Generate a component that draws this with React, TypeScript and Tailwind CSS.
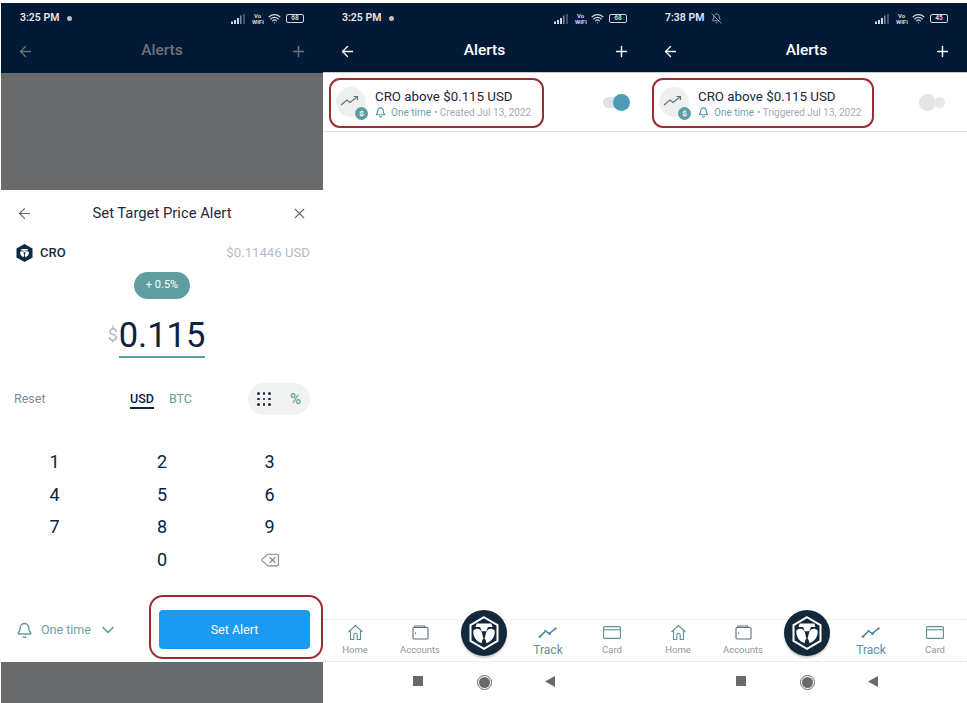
import type { ReactNode } from "react";
import { ArrowLeft, Bell, BellOff, ChevronDown, Delete, Plus, Wifi, X } from "lucide-react";

const NAVY = "#031a36";

const LionShapes = ({ fill }: { fill: string }) => (
  <>
    <path d="M9.5 7.5h13l1 3.2h-15z" fill={fill} />
    <path d="M12.5 10.7h7L18 14.5h-4z" fill={fill} />
    <path d="M6.5 14c2.5-3 6-2 7.5 1l1.5 6c-1 1-1.5 2-1.5 4-4-1-8-5-7.500-11z" fill={fill} />
    <path d="M25.5 14c-2.5-3-6-2-7.5 1l-1.5 6c1 1 1.5 2 1.500 4 4-1 8-5 7.500-11z" fill={fill} />
  </>
);

const StatusBar = ({ time, battery, muted }: { time: string; battery: string; muted?: boolean }) => (
  <div className="flex h-[28px] items-center px-[19px] pt-[3px] text-white">
    <span className="text-[10.5px] font-semibold leading-none text-gray-200">{time}</span>
    {muted ? (
      <BellOff size={11} strokeWidth={1.5} className="ml-[7px] text-gray-300" />
    ) : (
      <span className="ml-[8px] h-[5px] w-[5px] rounded-full bg-[#c9b9b9]" />
    )}
    <div className="ml-auto flex items-center gap-[5px] text-gray-300">
      <svg width="16" height="10" viewBox="0 0 16 10" fill="currentColor">
        <rect x="0" y="7.5" width="2" height="2.5" />
        <rect x="3" y="6" width="2" height="4" />
        <rect x="6" y="4" width="2" height="6" />
        <rect x="9" y="1.5" width="1.5" height="8.5" opacity="0.6" />
        <rect x="12.5" y="0" width="1" height="10" opacity="0.6" />
      </svg>
      <span className="w-[11px] text-center text-[6px] font-bold leading-[6px]">
        Vo
        <br />
        WiFi
      </span>
      <Wifi size={13} strokeWidth={2.2} />
      <span className="flex h-[9px] w-[18px] items-center justify-center rounded-[2px] border border-gray-300 text-[6.5px] font-bold leading-none">
        {battery}
      </span>
    </div>
  </div>
);

const AppHeader = ({ dim }: { dim?: boolean }) => (
  <div className={`flex h-[40px] items-center justify-between px-[16px] ${dim ? "text-[#6d7378]" : "text-white"}`}>
    <ArrowLeft size={17} strokeWidth={1.8} />
    <span className="text-[15.5px] font-medium">Alerts</span>
    <Plus size={17} strokeWidth={2} />
  </div>
);

const AlertRow = ({ meta, on }: { meta: string; on: boolean }) => (
  <div className="relative flex h-[59px] items-center border-b border-[#e0e2e3] pl-[13px] pr-[16px]">
    <div className="relative h-[30px] w-[30px] rounded-full bg-[#eef0f0]">
      <svg width="20" height="12" viewBox="0 0 20 12" className="absolute left-[4px] top-[8px]" fill="none" stroke="#5f7480" strokeWidth="1.2">
        <path d="M1 10 7 5l3 2.5L17 2" />
        <path d="M13.5 1.5 17.5 1.5 17.5 5" />
      </svg>
      <span className="absolute -bottom-[3px] -right-[2px] flex h-[13px] w-[13px] items-center justify-center rounded-full bg-[#5f9ea0] text-[8px] font-bold leading-none text-white">
        $
      </span>
    </div>
    <div className="ml-[9px] mt-[2px]">
      <div className="text-[13.3px] leading-[17px] text-[#14263f]">CRO above $0.115 USD</div>
      <div className="mt-[1px] flex items-center text-[10px] leading-[13px]">
        <Bell size={11} strokeWidth={2.4} className="mr-[5px] text-[#4f9296]" />
        <span className="text-[#6fa3a6]">One time</span>
        <span className="ml-[3px] text-[#a3acb2]">• {meta}</span>
      </div>
    </div>
    {on ? (
      <div className="ml-auto flex items-center">
        <span className="h-[11px] w-[18px] rounded-full bg-[#dfe1e2]" />
        <span className="-ml-[8px] h-[17px] w-[17px] rounded-full bg-[#4f9bb3]" />
      </div>
    ) : (
      <div className="ml-auto mr-[6px] flex items-center">
        <span className="h-[17px] w-[17px] rounded-full bg-[#e2e4e5]" />
        <span className="-ml-[2px] h-[11px] w-[11px] rounded-full bg-[#e6e8e9]" />
      </div>
    )}
    {/* red annotation ring */}
    <div className={`absolute bottom-[3px] left-[6px] top-[5px] rounded-[11px] border-2 border-[#9b2c33] ${on ? "w-[215px]" : "w-[222px]"}`} />
  </div>
);

const HomeIcon = () => (
  <svg width="17" height="17" viewBox="0 0 17 17" fill="none" stroke="#5f8f96" strokeWidth="1.1">
    <path d="M1.5 8 8.5 1.5 15.5 8" />
    <path d="M3.5 7v8.5h3.3V11a1.7 1.7 0 0 1 3.4 0v4.5h3.3V7" />
  </svg>
);

const WalletIcon = () => (
  <svg width="17" height="15" viewBox="0 0 17 15" fill="none" stroke="#5d6f7a" strokeWidth="1.1">
    <rect x="1" y="2.5" width="15" height="11.5" rx="1" />
    <path d="M2 2.5 3 1h9.5l1 1.5" />
    <path d="M3 8h1" strokeWidth="1.5" stroke="#3b7f86" />
  </svg>
);

const TrackIcon = () => (
  <svg width="20" height="13" viewBox="0 0 20 13" fill="none">
    <path d="M2 10.5 7.5 5l4 2.5 6-5" stroke="#3b6f78" strokeWidth="1.3" />
    <circle cx="2" cy="10.5" r="1.5" fill="#5f9ea0" />
    <circle cx="7.5" cy="5" r="1.3" fill="#5f9ea0" />
    <circle cx="11.5" cy="7.5" r="1.5" fill="#2f9fdc" />
    <circle cx="17.5" cy="2.5" r="1.3" fill="#5f9ea0" />
  </svg>
);

const CardIcon = () => (
  <svg width="18" height="13" viewBox="0 0 18 13" fill="none" stroke="#5f8f96" strokeWidth="1.1">
    <rect x="0.6" y="0.6" width="16.8" height="11.8" rx="1" />
    <path d="M0.6 3.8h16.8" />
  </svg>
);

const NavItem = ({ icon, label, active }: { icon: ReactNode; label: string; active?: boolean }) => (
  <div className="flex flex-col items-center">
    <div className="flex h-[18px] items-center">{icon}</div>
    <span className={active ? "mt-[2px] text-[12px] leading-[14px] text-[#5f8f96]" : "mt-[3px] text-[9.5px] leading-[12px] text-[#8c989e]"}>
      {label}
    </span>
  </div>
);

const BottomNav = () => (
  <div className="relative grid h-[52px] grid-cols-[64px_66px_62px_66px_62px] border-b border-dotted border-[#d8dadb] pt-[13px]">
    <div className="absolute inset-x-0 top-[9px] border-t border-dotted border-[#e2e4e5]" />
    <NavItem icon={<HomeIcon />} label="Home" />
    <NavItem icon={<WalletIcon />} label="Accounts" />
    <div />
    <NavItem icon={<TrackIcon />} label="Track" active />
    <NavItem icon={<CardIcon />} label="Card" />
    <div className="absolute left-[138px] top-0 flex h-[46px] w-[46px] items-center justify-center rounded-full bg-[#14283c] shadow-[0_2px_2px_rgba(0,0,0,0.2)]">
      <svg width="36" height="36" viewBox="0 0 32 32">
        <path d="M16 2 28 9v14l-12 7-12-7V9z" fill="none" stroke="#fff" strokeWidth="1.8" />
        <LionShapes fill="#fff" />
      </svg>
    </div>
  </div>
);

const SystemNav = () => (
  <div className="flex h-[41px] items-start pl-[90px] pt-[13px]">
    <span className="mt-[1px] h-[10px] w-[10px] bg-[#666a6d]" />
    <span className="ml-[54px] flex h-[15px] w-[15px] items-center justify-center rounded-full border border-[#666a6d]">
      <span className="h-[11px] w-[11px] rounded-full bg-[#666a6d]" />
    </span>
    <svg width="10" height="11" viewBox="0 0 10 11" className="ml-[53px] mt-[1px]">
      <path d="M10 0v11L0 5.5z" fill="#666a6d" />
    </svg>
  </div>
);

const AlertsPanel = ({ time, battery, muted, meta, on, width }: { time: string; battery: string; muted?: boolean; meta: string; on: boolean; width: string }) => (
  <div className={`flex h-full flex-col bg-white pt-[3px] ${width}`}>
    <div style={{ backgroundColor: NAVY }} className="h-[69px]">
      <StatusBar time={time} battery={battery} muted={muted} />
      <AppHeader />
    </div>
    <div className="h-px bg-[#c9cccd]" />
    <AlertRow meta={meta} on={on} />
    <div className="flex-1" />
    <BottomNav />
    <SystemNav />
  </div>
);

const KEYS = ["1", "2", "3", "4", "5", "6", "7", "8", "9", "", "0"];

const TargetPanel = () => (
  <div className="flex h-full w-[323px] flex-col bg-white pl-[1px] pt-[3px]">
    <div style={{ backgroundColor: NAVY }} className="h-[70px]">
      <StatusBar time="3:25 PM" battery="68" />
      <AppHeader dim />
    </div>
    <div className="h-[117px] bg-[#696a6b]" />

    <div className="relative flex h-[472px] flex-col">
      <div className="flex h-[46px] items-center justify-between px-[15px] text-[#5b6b72]">
        <ArrowLeft size={17} strokeWidth={1.6} />
        <span className="text-[14.8px] text-[#1c2b3f]">Set Target Price Alert</span>
        <X size={17} strokeWidth={1.6} />
      </div>
      <div className="flex h-[33px] items-center pl-[14px] pr-[13px]">
        <svg width="19" height="20" viewBox="0 0 32 32">
          <path d="M16 1 29.5 8.5v15L16 31 2.5 23.5v-15z" fill="#0f2a44" />
          <g transform="translate(3.5 3.5) scale(0.78)">
            <LionShapes fill="#fff" />
          </g>
        </svg>
        <span className="ml-[6px] text-[13px] font-medium text-[#1c2b3f]">CRO</span>
        <span className="ml-auto text-[13.2px] text-[#b5bcc1]">$0.11446 USD</span>
      </div>
      <div className="mt-[3px] flex justify-center">
        <span className="flex h-[27px] w-[56px] items-center justify-center rounded-full bg-[#5f9ea0] text-[11px] text-white">+ 0.5%</span>
      </div>
      <div className="mt-[16px] flex justify-center">
        <div className="relative border-b-2 border-[#5f9ea0] pb-[1px]">
          <span className="text-[34.5px] leading-[40px] text-[#0b2240]">0.115</span>
          <span className="absolute -left-[11px] top-[9px] text-[18px] leading-[22px] text-[#b5bcc1]">$</span>
        </div>
      </div>
      <div className="mt-[19px] flex h-[44px] items-center px-[13px]">
        <span className="w-[116px] text-[12.5px] text-[#7f8a90]">Reset</span>
        <span className="border-b-2 border-[#0b2240] text-[12.5px] font-medium leading-[17px] text-[#0b2240]">USD</span>
        <span className="ml-[15px] text-[12.5px] text-[#5f9ea0]">BTC</span>
        <div className="ml-auto flex h-[32px] w-[62px] items-center justify-between rounded-full bg-[#f1f2f2] px-[9px]">
          <span className="grid grid-cols-3 gap-[3px]">
            {Array.from({ length: 9 }).map((_, i) => (
              <span key={i} className="h-[2.5px] w-[2.5px] rounded-full bg-[#1c2b3f]" />
            ))}
          </span>
          <span className="text-[15px] font-medium text-[#5f9ea0]">%</span>
        </div>
      </div>
      <div className="mt-[24px] grid grid-cols-[107px_108px_107px]">
        {KEYS.map((k, i) => (
          <span key={i} className="h-[32.7px] text-center text-[18px] leading-[33px] text-[#0b2240]">{k}</span>
        ))}
        <span className="flex h-[33px] items-center justify-center">
          <Delete size={20} strokeWidth={1.3} className="text-[#7f8a90]" />
        </span>
      </div>
      <div className="mt-auto flex h-[52px] items-start pb-[13px] pl-[15px] pr-[13px]">
        <div className="mt-[10px] flex items-center text-[#5f9ea0]">
          <Bell size={17} strokeWidth={2} />
          <span className="ml-[8px] text-[12.5px] text-[#6f9ea3]">One time</span>
          <ChevronDown size={20} strokeWidth={2} className="ml-[7px]" />
        </div>
        <button className="ml-auto h-[39px] w-[151px] rounded-[4px] bg-[#1a9af0] pt-[2px] text-[12.5px] text-white">Set Alert</button>
      </div>
      {/* red annotation ring */}
      <div className="absolute bottom-[3px] right-0 h-[64px] w-[174px] rounded-[14px] border-2 border-[#9b2c33]" />
    </div>

    <div className="flex-1 bg-[#696a6b]" />
  </div>
);

export default function App() {
  return (
    <div className="flex h-[703px] w-[967px] overflow-hidden bg-white font-['Roboto',sans-serif]">
      <TargetPanel />
      <AlertsPanel width="w-[323px]" time="3:25 PM" battery="68" meta="Created Jul 13, 2022" on />
      <AlertsPanel width="w-[321px]" time="7:38 PM" battery="45" muted meta="Triggered Jul 13, 2022" on={false} />
    </div>
  );
}
